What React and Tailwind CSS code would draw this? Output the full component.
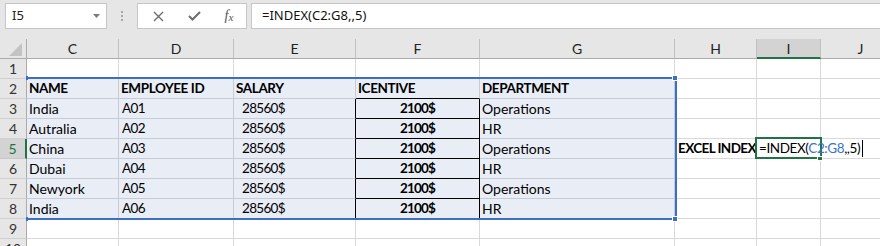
import React from "react";

const cols = [
  { k: "C", w: "w-[92px]" },
  { k: "D", w: "w-[115px]" },
  { k: "E", w: "w-[122px]" },
  { k: "F", w: "w-[124px]" },
  { k: "G", w: "w-[195px]" },
  { k: "H", w: "w-[82px]" },
  { k: "I", w: "w-[64px]" },
  { k: "J", w: "w-[80px]" },
];

const data = [
  ["India", "A01", "Operations"],
  ["Autralia", "A02", "HR"],
  ["China", "A03", "Operations"],
  ["Dubai", "A04", "HR"],
  ["Newyork", "A05", "Operations"],
  ["India", "A06", "HR"],
];

function cellContent(r, c) {
  if (r === 2) {
    const h = ["NAME", "EMPLOYEE ID", "SALARY", "ICENTIVE", "DEPARTMENT"];
    if (c < 5)
      return (
        <span className="pl-[2px] font-bold text-[13.5px] tracking-[-0.4px] whitespace-nowrap">
          {h[c]}
        </span>
      );
  }
  if (r >= 3 && r <= 8) {
    const d = data[r - 3];
    if (c === 0) return <span className="pl-[2px]">{d[0]}</span>;
    if (c === 1)
      return <span className="pl-[3px] text-[13.5px] tracking-[-0.6px]">{d[1]}</span>;
    if (c === 2)
      return <span className="pl-[8px] text-[13.5px] tracking-[-0.7px]">28560$</span>;
    if (c === 3)
      return (
        <span className="w-full text-center font-bold text-[13.5px] tracking-[-0.8px]">
          2100$
        </span>
      );
    if (c === 4) return <span className="pl-[2px]">{d[2]}</span>;
  }
  if (r === 5 && c === 5)
    return (
      <span className="pl-[3px] font-bold text-[13.5px] tracking-[-0.6px] whitespace-nowrap">
        EXCEL INDEX
      </span>
    );
  if (r === 5 && c === 6)
    return (
      <span className="relative z-20 pl-[2px] whitespace-nowrap text-[13.5px] tracking-[-0.4px]">
        =INDEX(<span className="text-[#3a72cf]">C2:G8</span>,,5)
        <span className="inline-block w-[1px] h-[17px] bg-black align-middle ml-[2px] -mt-[2px]"></span>
      </span>
    );
  return null;
}

function cellClass(r, c) {
  const inRange = r >= 2 && r <= 8 && c <= 4;
  let br = inRange ? "border-r-[#c7cbd3]" : "border-r-[#d9d9d9]";
  let bb = inRange ? "border-b-[#c7cbd3]" : "border-b-[#d9d9d9]";
  if (r >= 3 && r <= 8 && (c === 2 || c === 3)) br = "border-r-black";
  if (c === 3 && r >= 2 && r <= 8) bb = "border-b-black";
  const bg = inRange ? "bg-[#e9edf6]" : "";
  return `${br} ${bb} ${bg}`;
}

function Row({ r }) {
  const active = r === 5;
  return (
    <div className="flex h-[20px]">
      <div
        className={
          active
            ? "w-[27px] shrink-0 h-[20px] bg-[#d3d3d3] border-r-2 border-r-[#217346] border-b border-b-[#c8c8c8] flex items-center justify-center text-[#217346] leading-none"
            : "w-[27px] shrink-0 h-[20px] bg-[#e6e6e6] border-r border-r-[#ababab] border-b border-b-[#d0d0d0] flex items-center justify-center text-[#333] leading-none"
        }
      >
        {r}
      </div>
      {cols.map((col, c) => (
        <div
          key={col.k}
          className={`${col.w} shrink-0 h-[20px] border-r border-b flex items-center leading-[19px] text-black ${cellClass(r, c)}`}
        >
          {cellContent(r, c)}
        </div>
      ))}
    </div>
  );
}

export default function App() {
  const rows = [1, 2, 3, 4, 5, 6, 7, 8, 9, 10];
  return (
    <div className="relative w-[880px] h-[246px] overflow-hidden bg-white font-['Lato',sans-serif] text-[14px]">
      {/* top bar */}
      <div className="h-[39px] bg-[#e6e6e6] flex items-start pt-[3px]">
        <div className="ml-[5px] w-[102px] h-[26px] bg-white border border-[#c6c6c6] flex items-center justify-between pl-[6px] pr-[6px] font-['Noto_Sans',sans-serif] text-[13px] text-[#222]">
          <span>I5</span>
          <svg width="7" height="4" viewBox="0 0 7 4">
            <path d="M0 0 L7 0 L3.5 4 Z" fill="#7a7a7a" />
          </svg>
        </div>
        <div className="w-[30px] h-[26px] flex flex-col items-center justify-center gap-[2px]">
          <div className="w-[2px] h-[2px] bg-[#a6a6a6]"></div>
          <div className="w-[2px] h-[2px] bg-[#a6a6a6]"></div>
          <div className="w-[2px] h-[2px] bg-[#a6a6a6]"></div>
        </div>
        <div className="w-[110px] h-[26px] bg-white border border-[#c6c6c6] flex items-center">
          <div className="w-[38px] flex justify-center pl-[2px]">
            <svg width="11" height="11" viewBox="0 0 11 11">
              <path d="M1 1 L10 10 M10 1 L1 10" stroke="#6d6d6d" strokeWidth="1.4" />
            </svg>
          </div>
          <div className="w-[36px] flex justify-center">
            <svg width="13" height="10" viewBox="0 0 13 10">
              <path d="M1 5 L4.5 8.5 L12 1" stroke="#6d6d6d" strokeWidth="2" fill="none" />
            </svg>
          </div>
          <div className="w-[34px] flex justify-center font-['Liberation_Serif',serif] italic text-[14px] text-[#555] leading-none">
            <span>f</span>
            <span className="text-[11px] mt-[3px]">x</span>
          </div>
        </div>
        <div className="ml-[4px] flex-1 h-[26px] bg-white border border-r-0 border-[#c6c6c6] flex items-center pl-[10px] font-['Noto_Sans',sans-serif] text-[13px] text-[#111]">
          =INDEX(C2:G8,,5)
        </div>
      </div>
      {/* column headers */}
      <div className="flex h-[20px]">
        <div className="w-[27px] shrink-0 h-[20px] bg-[#e6e6e6] border-r border-r-[#ababab] border-b border-b-[#ababab] relative">
          <svg className="absolute left-[9px] top-[4px]" width="13" height="13" viewBox="0 0 13 13">
            <path d="M13 0 L13 13 L0 13 Z" fill="#c3c3c3" />
          </svg>
        </div>
        {cols.map((col) =>
          col.k === "I" ? (
            <div
              key={col.k}
              className={`${col.w} shrink-0 h-[20px] bg-[#d3d3d3] border-r border-r-[#c0c0c0] border-b-2 border-b-[#217346] flex items-center justify-center text-[#222]`}
            >
              {col.k}
            </div>
          ) : (
            <div
              key={col.k}
              className={`${col.w} shrink-0 h-[20px] bg-[#e6e6e6] border-r border-r-[#c0c0c0] border-b border-b-[#ababab] flex items-center justify-center text-[#222]`}
            >
              {col.k}
            </div>
          )
        )}
      </div>
      {rows.map((r) => (
        <Row key={r} r={r} />
      ))}

      {/* range highlight */}
      <div className="absolute left-[27px] top-[77px] w-[650px] h-[143px] border-t-2 border-r-2 border-b-2 border-[#3b6fc5] pointer-events-none"></div>
      <div className="absolute left-[26px] top-[76px] w-[2px] h-[4px] bg-[#3b6fc5]"></div>
      <div className="absolute left-[26px] top-[217px] w-[2px] h-[4px] bg-[#3b6fc5]"></div>
      <div className="absolute left-[672px] top-[75px] w-[6px] h-[6px] bg-[#3b6fc5] border border-white"></div>
      <div className="absolute left-[672px] top-[216px] w-[6px] h-[6px] bg-[#3b6fc5] border border-white"></div>

      {/* active cell */}
      <div className="absolute z-10 left-[755px] top-[137px] w-[67px] h-[22px] border-2 border-[#217346] pointer-events-none"></div>
      <div className="absolute z-10 left-[817px] top-[156px] w-[6px] h-[5px] bg-[#217346] border border-white"></div>
    </div>
  );
}
